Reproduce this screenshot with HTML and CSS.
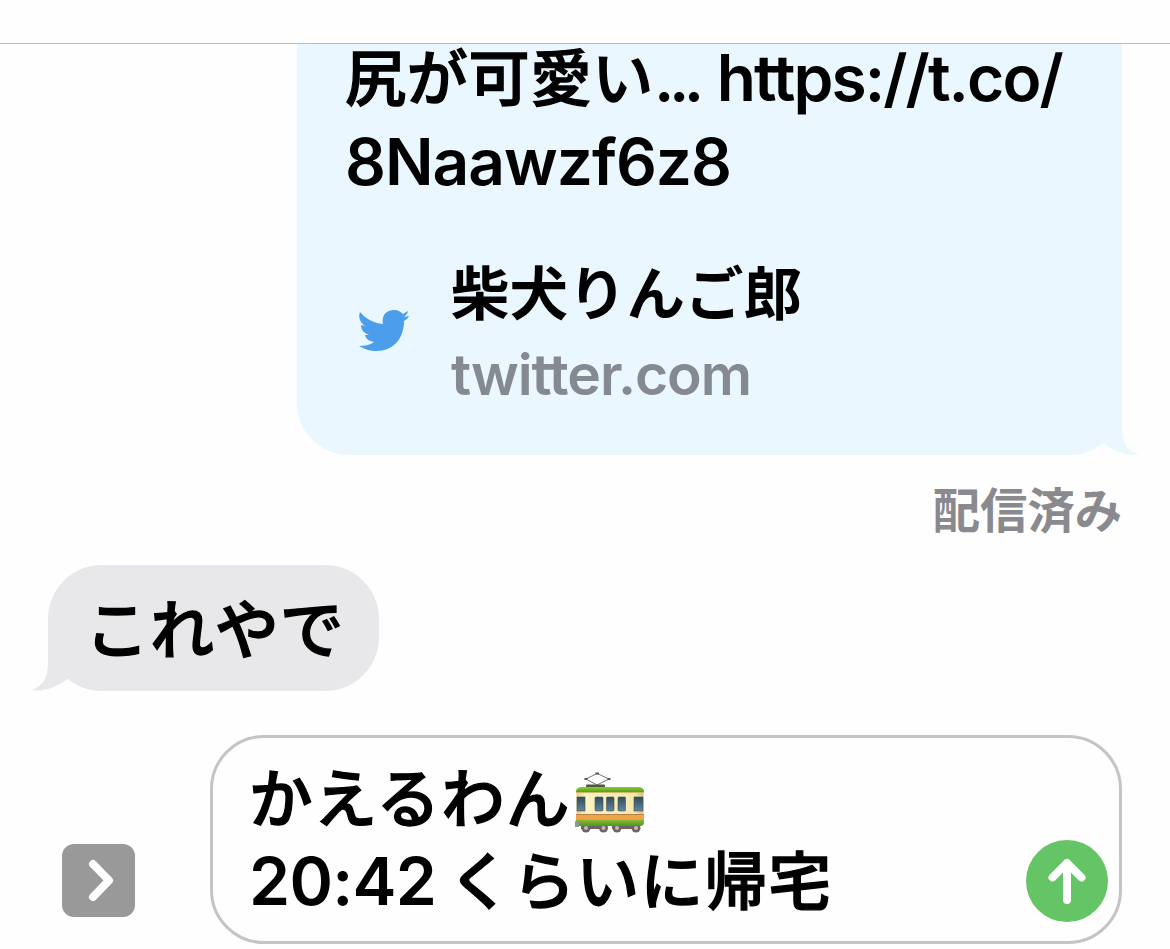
FILE: index.html
```html
<!DOCTYPE html>
<html lang="ja">
  <head>
    <meta charset="UTF-8" />
    <meta name="viewport" content="width=device-width, initial-scale=1.0" />
    <title>メッセージ</title>

    <!-- CSS -->
    <link rel="stylesheet" href="styles.css">
  </head>
  <body>
    <!-- Top bar -->
    <header class="top-bar"></header>

    <!-- Messages -->
    <main class="thread">
      <div class="bubble sent">
        <p class="message-line"><span class="jp">尻が可愛い</span><span class="dots">...</span><span class="url">https://t.co/</span></p>
        <p class="message-line"><span class="url-end">8Naawzf6z8</span></p>

        <div class="link-card">
          <svg class="bird" viewBox="0 0 50 42">
            <path d="M1 2C7 9 14 13 24 14C22 5 28 0 35 0C39 0 42 2 44 4L49 1C49 3 47 5 45 7L50 6C49 8 47 10 45 11C45 28 35 41 17 41C11 41 5 39 0 36C5 36 11 35 15 32C10 31 7 29 6 25H10C5 23 2 20 2 15L6 16C1 13 -1 7 1 2Z" />
          </svg>
          <div class="link-text">
            <p class="link-title">柴犬りんご郎</p>
            <p class="link-host">twitter.com</p>
          </div>
        </div>

        <svg class="tail" viewBox="0 0 42 44">
          <path d="M22 0V18C22 33 29 42 40 43.500C28 45 14 41 4 32V0Z" />
        </svg>
      </div>

      <p class="status">配信済み</p>

      <div class="bubble received">
        <p class="reply">これやで</p>
        <svg class="tail" viewBox="0 0 42 44">
          <path d="M16 -30V16C16 30 11 39 0 43C13 45 25 40 35 32V0Z" />
        </svg>
      </div>
    </main>

    <!-- Message form -->
    <footer class="composer">
      <button class="expand" aria-label="開く">
        <svg viewBox="0 0 73 73">
          <path d="M31 20L47 36.5L31 53" />
        </svg>
      </button>

      <div class="field">
        <div class="draft">
          <p class="draft-line"><span class="draft-jp">かえるわん</span><svg class="tram" viewBox="0 0 70 62">
              <defs>
                <linearGradient id="roof" x1="0" y1="0" x2="0" y2="1">
                  <stop offset="0" stop-color="#8ccb32" />
                  <stop offset="1" stop-color="#5a9e1c" />
                </linearGradient>
                <linearGradient id="side" x1="0" y1="0" x2="1" y2="0">
                  <stop offset="0" stop-color="#e3d28a" />
                  <stop offset="0.15" stop-color="#fbf2c0" />
                  <stop offset="0.85" stop-color="#f5e8ae" />
                  <stop offset="1" stop-color="#d5c481" />
                </linearGradient>
                <linearGradient id="glass" x1="0" y1="0" x2="0" y2="1">
                  <stop offset="0" stop-color="#2f4c5e" />
                  <stop offset="1" stop-color="#62849b" />
                </linearGradient>
                <linearGradient id="skirt" x1="0" y1="0" x2="0" y2="1">
                  <stop offset="0" stop-color="#86b83a" />
                  <stop offset="1" stop-color="#4f971f" />
                </linearGradient>
              </defs>
              <path d="M11 7L22 1.500L34 7L22 13Z" fill="none" stroke="#777" stroke-width="1" />
              <path d="M9.500 7H12.500M20.500 1.500H24M32.500 7H35.500" stroke="#555" stroke-width="2" />
              <rect x="11" y="12.500" width="19" height="3" rx="1" fill="#4c5a3c" />
              <g fill="#6e6265">
                <rect x="6" y="53" width="26" height="4" />
                <rect x="37" y="53" width="27" height="4" />
                <circle cx="11" cy="56" r="4.500" />
                <circle cx="28.500" cy="56" r="4.500" />
                <circle cx="42" cy="56" r="4.500" />
                <circle cx="61" cy="56" r="4.500" />
              </g>
              <g fill="#c4b8b8">
                <circle cx="11" cy="56" r="2" />
                <circle cx="28.500" cy="56" r="2" />
                <circle cx="42" cy="56" r="2" />
                <circle cx="61" cy="56" r="2" />
              </g>
              <rect x="1.500" y="18" width="67" height="25" fill="url(#side)" />
              <path d="M1 20Q1 15 7 15H63Q69 15 69 20Z" fill="url(#roof)" />
              <path d="M1 20.500H69" stroke="#c7b96c" stroke-width="1" />
              <rect x="1" y="42" width="68" height="7" fill="#f0a246" />
              <path d="M1 42.500H69" stroke="#be8145" stroke-width="1" />
              <path d="M1 48H69V50Q69 54 65 54H5Q1 54 1 50Z" fill="url(#skirt)" />
              <g fill="url(#glass)" stroke="#495050" stroke-width="0.600">
                <rect x="2" y="25" width="8" height="14" />
                <rect x="20" y="25" width="8" height="14" rx="1" />
                <rect x="31.500" y="25" width="7.500" height="14" rx="1" />
                <rect x="43" y="25" width="7.500" height="14" rx="1" />
                <rect x="59" y="25" width="9" height="14" />
              </g>
              <path d="M0 49H4V55H0Z" fill="#91978d" />
            </svg></p>
          <p class="draft-line"><span class="time">20:42</span><span class="draft-end">くらいに帰宅</span></p>
        </div>
        <button class="send" aria-label="送信">
          <svg viewBox="0 0 82 82">
            <path d="M41 60V23M26.500 37.500L41 23L55.500 37.500" />
          </svg>
        </button>
      </div>
    </footer>
  </body>
</html>
```

FILE: styles.css
```css
* {
  box-sizing: border-box;
}
body {
  display: flex;
  flex-direction: column;
  width: 1170px;
  height: 949px;
  margin: 0;
  overflow: hidden;
  background-color: #fefefe;
  color: #000000;
  font-family: Inter, "Noto Sans CJK JP", sans-serif;
  font-weight: 600;
  white-space: nowrap;
}
p {
  margin: 0;
}
button {
  padding: 0;
  border: none;
}
svg {
  display: block;
}
.top-bar {
  height: 44px;
  border-bottom: 1px solid #b9bbbd;
}
.thread {
  display: flex;
  flex-direction: column;
  height: 692px;
}
.bubble {
  position: relative;
}
.sent {
  align-self: flex-end;
  width: 825px;
  height: 411px;
  margin-right: 48px;
  padding: 0 0 0 48px;
  border-radius: 0 0 52px 52px;
  background-color: #ebf7fe;
}
.message-line {
  display: flex;
  height: 84px;
  font-size: 64px;
  line-height: 68px;
}
.jp,
.reply,
.draft-jp,
.draft-end {
  font-weight: 500;
  -webkit-text-stroke: 1.3px #000000;
}
.jp {
  font-size: 61px;
  letter-spacing: 0.8px;
  line-height: 71px;
}
.dots {
  margin-right: 18px;
  letter-spacing: -5.5px;
}
.url {
  letter-spacing: -1.9px;
}
.url-end {
  letter-spacing: -1px;
}
.link-card {
  display: flex;
  align-items: center;
  gap: 42px;
  height: 160px;
  margin-top: 40px;
  padding-left: 14px;
}
.bird {
  width: 50px;
  height: 42px;
  margin-bottom: 2px;
  fill: #4a9eec;
}
.link-title {
  height: 85px;
  font-size: 58.5px;
  font-weight: 700;
  line-height: 83px;
}
.link-host {
  height: 75px;
  color: #858992;
  font-size: 57px;
  letter-spacing: -1.1px;
  line-height: 76px;
}
.tail {
  position: absolute;
  width: 42px;
  height: 44px;
  overflow: visible;
}
.sent .tail {
  right: -20px;
  bottom: 0;
  fill: #ebf7fe;
}
.status {
  height: 110px;
  padding-right: 48px;
  color: #8a898e;
  font-size: 47.3px;
  font-weight: 700;
  line-height: 112px;
  text-align: right;
}
.received {
  align-self: flex-start;
  width: 331px;
  height: 126px;
  margin-left: 48px;
  padding-left: 37px;
  border-radius: 54px;
  background-color: #e8e8ea;
}
.reply {
  font-size: 64px;
  letter-spacing: 0.9px;
  line-height: 129px;
}
.received .tail {
  bottom: 0;
  left: -16px;
  fill: #e8e8ea;
}
.composer {
  display: flex;
  gap: 75px;
  height: 213px;
  padding-left: 62px;
}
.expand {
  width: 73px;
  height: 73px;
  margin-top: 108px;
  border-radius: 12px;
  background-color: #999999;
}
.expand path {
  fill: none;
  stroke: #ffffff;
  stroke-width: 8;
  stroke-linecap: round;
  stroke-linejoin: round;
}
.field {
  display: flex;
  justify-content: space-between;
  width: 912px;
  height: 209px;
  margin-top: -1px;
  padding: 18px 11px 0 36px;
  border: 3px solid #c4c4c5;
  border-radius: 54px;
}
.draft-line {
  display: flex;
  height: 84px;
  font-size: 66px;
  line-height: 82px;
}
.draft-jp {
  font-size: 63.5px;
  letter-spacing: 1.2px;
  line-height: 86px;
}
.draft-end {
  font-size: 63px;
  letter-spacing: 1px;
}
.tram {
  width: 70px;
  height: 62px;
  margin: 16px 0 0 4px;
}
.time {
  margin-right: 12px;
  letter-spacing: -0.7px;
}
.send {
  width: 82px;
  height: 82px;
  margin-top: 84px;
  border-radius: 50%;
  background-color: #65c466;
}
.send path {
  fill: none;
  stroke: #ffffff;
  stroke-width: 8;
  stroke-linecap: round;
  stroke-linejoin: round;
}
```
